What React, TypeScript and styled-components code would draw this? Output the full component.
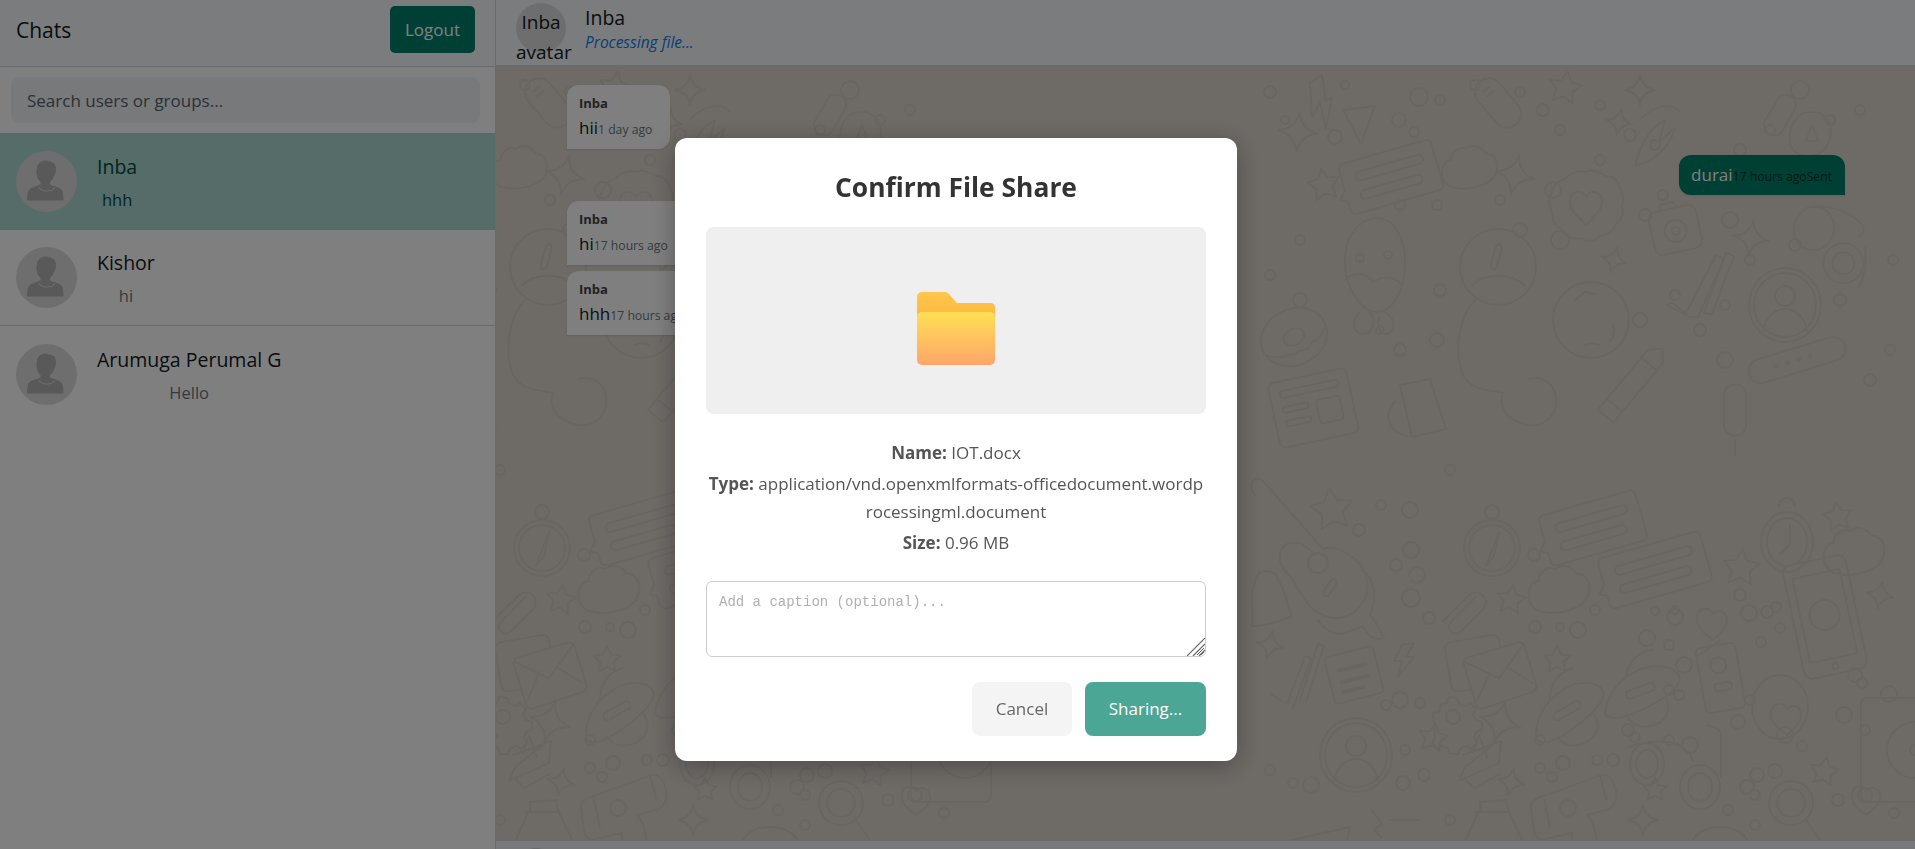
import React from 'react';
import styled, { createGlobalStyle } from 'styled-components';

const GlobalStyle = createGlobalStyle`
  html, body {
    margin: 0;
    padding: 0;
    height: 100%;
    overflow: hidden;
    background: #fff;
    font-family: "Open Sans", "Noto Sans", sans-serif;
    color: #111b21;
  }
  * {
    box-sizing: border-box;
  }
`;

const Page = styled.div`
  display: flex;
  height: 100vh;
  overflow: hidden;
`;

const Sidebar = styled.aside`
  flex: 0 0 496px;
  display: flex;
  flex-direction: column;
  background: #fff;
  border-right: 1px solid #d1d7db;
`;

const SidebarHeader = styled.header`
  flex: 0 0 67px;
  display: flex;
  align-items: center;
  justify-content: space-between;
  padding: 0 20px 7px 16px;
  background: #f5f8fb;
  border-bottom: 1px solid #d1d7db;
`;

const SidebarTitle = styled.h2`
  margin: 0;
  font-size: 21px;
  font-weight: 400;
  color: #111b21;
`;

const LogoutButton = styled.button`
  width: 85px;
  height: 47px;
  border: none;
  border-radius: 5px;
  background: #008069;
  color: #fff;
  font: inherit;
  font-size: 17px;
`;

const SearchBox = styled.div`
  flex: 0 0 66px;
  padding: 10px 15px 10px 11px;
`;

const SearchInput = styled.input`
  width: 100%;
  height: 46px;
  padding: 0 16px;
  border: none;
  border-radius: 8px;
  background: #f0f2f5;
  font: inherit;
  font-size: 17px;
  &::placeholder {
    color: #54656f;
    opacity: 1;
  }
`;

const ChatRow = styled.div<{ $active?: boolean }>`
  height: 96.5px;
  display: flex;
  align-items: center;
  gap: 20px;
  padding: 0 16px;
  background: ${(p) => (p.$active ? '#add8d2' : '#fff')};
  & + & {
    border-bottom: 1px solid #d1d7db;
  }
  &:last-child {
    border-bottom: none;
  }
`;

const RowText = styled.div<{ $active?: boolean }>`
  display: flex;
  flex-direction: column;
  align-items: center;
  padding-top: 4px;
  color: ${(p) => (p.$active ? '#004d40' : '#111b21')};
`;

const RowName = styled.div`
  font-size: 19.5px;
  line-height: 33px;
`;

const RowPreview = styled.div<{ $active?: boolean }>`
  font-size: 16.5px;
  line-height: 33px;
  color: ${(p) => (p.$active ? '#004d40' : '#667781')};
`;

const ChatPane = styled.main`
  flex: 1;
  min-width: 0;
  display: flex;
  flex-direction: column;
`;

const ChatHeader = styled.header`
  flex: 0 0 66px;
  display: flex;
  gap: 19px;
  padding: 3px 20px 0;
  background: #f5f8fb;
  border-bottom: 1px solid #d1d7db;
`;

const HeaderAvatar = styled.div`
  flex: 0 0 50px;
  width: 50px;
  min-width: 0;
  height: 50px;
  padding-top: 4px;
  border-radius: 50%;
  background: #dcdcdc;
  font-size: 19px;
  line-height: 30px;
  text-align: center;
  color: #111b21;
`;

const HeaderText = styled.div`
  display: flex;
  flex-direction: column;
`;

const HeaderName = styled.div`
  font-size: 19.5px;
  line-height: 29px;
`;

const HeaderStatus = styled.div`
  font-size: 15.5px;
  line-height: 20px;
  font-style: italic;
  color: #0d80f2;
`;

const ChatBody = styled.section`
  position: relative;
  flex: 0 0 774px;
  display: flex;
  flex-direction: column;
  gap: 6px;
  padding: 19px 70px 0 71px;
  background: #dcd6ce;
  overflow: hidden;
`;

const Wallpaper = styled.svg`
  position: absolute;
  inset: 0;
  width: 100%;
  height: 100%;
  fill: none;
  stroke: #d2ccc3;
  stroke-width: 1.8;
  stroke-linecap: round;
  stroke-linejoin: round;
`;

const Bubble = styled.div<{ $mine?: boolean }>`
  position: relative;
  align-self: ${(p) => (p.$mine ? 'flex-end' : 'flex-start')};
  padding: ${(p) => (p.$mine ? '6px 13px 6px 12px' : '7px 18px 7px 12px')};
  background: ${(p) => (p.$mine ? '#008069' : '#fff')};
  color: ${(p) => (p.$mine ? '#fff' : '#111b21')};
  border-radius: ${(p) => (p.$mine ? '12px 12px 0 12px' : '12px 12px 12px 0')};
  box-shadow: 0 1px 2px rgba(0, 0, 0, 0.1);
`;

const Sender = styled.div`
  font-size: 13px;
  line-height: 22px;
  font-weight: 700;
  color: #444;
`;

const MessageText = styled.span`
  font-size: 17px;
  line-height: 28px;
`;

const MessageMeta = styled.span<{ $mine?: boolean }>`
  font-size: 12.2px;
  color: ${(p) => (p.$mine ? '#00332a' : '#667781')};
`;

const ChatFooter = styled.footer`
  flex: 0 0 70px;
  padding: 7px 20px;
  background: #f0f3f5;
  border-top: 1px solid #d1d7db;
`;

const AttachButton = styled.div`
  width: 40px;
  height: 40px;
  border-radius: 50%;
  background: #cfd3d6;
`;

const Overlay = styled.div`
  position: fixed;
  inset: 0;
  display: flex;
  align-items: flex-start;
  justify-content: center;
  padding: 138px 3px 0 0;
  background: rgba(0, 0, 0, 0.5);
`;

const Modal = styled.div`
  width: 562px;
  height: 623px;
  padding: 30px 31px 25px;
  border-radius: 12px;
  background: #fff;
  box-shadow: 0 5px 25px rgba(0, 0, 0, 0.3);
`;

const ModalTitle = styled.h3`
  margin: 0 0 21px;
  font-size: 26.4px;
  line-height: 38px;
  font-weight: 700;
  text-align: center;
  color: #333;
`;

const Preview = styled.div`
  height: 187px;
  padding-top: 15px;
  display: flex;
  align-items: center;
  justify-content: center;
  border-radius: 8px;
  background: #efefef;
`;

const Details = styled.div`
  margin: 24.5px 0 24px;
  display: flex;
  flex-direction: column;
  gap: 4px;
  text-align: center;
  color: #555;
`;

const DetailLine = styled.p`
  margin: 0;
  font-size: 17px;
  line-height: 27.5px;
  word-break: break-all;
`;

const CaptionField = styled.div`
  position: relative;
`;

const CaptionInput = styled.textarea`
  display: block;
  width: 100%;
  height: 76px;
  padding: 12px;
  border: 1px solid #ccc;
  border-radius: 6px;
  font-family: "Liberation Mono", monospace;
  font-size: 14px;
  &::placeholder {
    color: #b0b0b0;
    opacity: 1;
  }
`;

const ResizeGrip = styled.svg`
  position: absolute;
  right: 1px;
  bottom: 1px;
  pointer-events: none;
`;

const Actions = styled.div`
  margin-top: 25px;
  display: flex;
  justify-content: flex-end;
  gap: 13px;
`;

const ModalButton = styled.button<{ $primary?: boolean }>`
  width: ${(p) => (p.$primary ? '121px' : '100px')};
  height: 54px;
  border: none;
  border-radius: 8px;
  font: inherit;
  font-size: 17px;
  background: ${(p) => (p.$primary ? '#008069' : '#f4f4f4')};
  color: ${(p) => (p.$primary ? '#fff' : '#666')};
  opacity: ${(p) => (p.$primary ? 0.7 : 1)};
`;

const RowAvatar = () => (
  <svg width="61" height="61" viewBox="0 0 61 61">
    <circle cx="30.5" cy="30.5" r="30.5" fill="#dcdcdc" />
    <path
      d="M21 18c-.5-4 3-8 8-8.500 2 0 3 .5 4 1 4 0 7 2.500 7 7 0 3-.5 5-1.500 7-1 2.500-2.500 4.500-4 6-1 1-1 2.500.5 3.500 4 1.500 9 2.500 11 5.500 1 2 1.500 5.500 1.500 10H11c0-4.500.5-8 1.500-10 2-3 7-4 11-5.500 1.500-1 1.500-2.500.5-3.500-1.500-1.500-2.500-3.500-3-6-.5-2-1-4.500 0-6.500z"
      fill="#b2b2b2"
    />
    <path d="M23 36.500c2 2.500 5 3.500 8 3.500s6-1 8-3.500" fill="none" stroke="#dcdcdc" strokeWidth="1.2" />
  </svg>
);

const FolderIcon = () => (
  <svg width="78" height="73" viewBox="0 0 78 73">
    <defs>
      <linearGradient id="folderBack" x1="0" y1="0" x2="0" y2="1">
        <stop offset="0" stopColor="#ffc64d" />
        <stop offset="1" stopColor="#ffb03a" />
      </linearGradient>
      <linearGradient id="folderFront" x1="0" y1="0" x2="0" y2="1">
        <stop offset="0" stopColor="#ffdf55" />
        <stop offset="1" stopColor="#ffa56a" />
      </linearGradient>
    </defs>
    <path
      d="M5 0h23c1.500 0 2.500.5 3.500 1.500L40 11h34c2.200 0 4 1.800 4 4v25H0V5c0-2.800 2.200-5 5-5z"
      fill="url(#folderBack)"
    />
    <rect x="0" y="20" width="78" height="53" rx="5" fill="url(#folderFront)" />
  </svg>
);

const starPath = (r: number) => {
  let d = '';
  for (let i = 0; i < 10; i++) {
    const rad = i % 2 === 0 ? r : r * 0.5;
    const a = (Math.PI / 5) * i - Math.PI / 2;
    d += `${i === 0 ? 'M' : 'L'}${(rad * Math.cos(a)).toFixed(1)} ${(rad * Math.sin(a)).toFixed(1)}`;
  }
  return d + 'z';
};

const sparklePath = (r: number) => {
  const q = r * 0.14;
  return `M0 ${-r}Q${q} ${-q} ${r} 0Q${q} ${q} 0 ${r}Q${-q} ${q} ${-r} 0Q${-q} ${-q} 0 ${-r}z`;
};

const stars: number[][] = [
  [1565, 88, 17, 10], [1324, 185, 17, -10], [1511, 600, 15, 8], [1741, 568, 19, 5], [1838, 517, 15, -8],
  [1557, 660, 14, 0], [1332, 510, 22, -8], [1433, 738, 15, 10], [1824, 772, 15, 10], [1655, 790, 12, 0],
];

const sparkles: number[][] = [
  [1298, 132, 20, 5], [1640, 90, 15, 0], [1619, 122, 13, 10], [1515, 175, 20, 12], [1614, 260, 13, 15],
  [1751, 238, 18, 8], [1500, 722, 21, 15], [1270, 645, 14, 12], [1511, 782, 14, 12], [1643, 820, 15, 0],
  [1880, 595, 14, 10],
];

const dots: number[][] = [
  [1270, 92, 6], [1419, 97, 9], [1399, 120, 7], [1335, 137, 7], [1414, 132, 5], [1285, 120, 4], [1345, 85, 4],
  [1440, 100, 5], [1475, 85, 5], [1520, 92, 5], [1543, 110, 6], [1560, 130, 5], [1600, 105, 5], [1553, 190, 8],
  [1600, 160, 5], [1630, 135, 6], [1655, 145, 5], [1740, 150, 6], [1770, 130, 5], [1800, 90, 9], [1830, 120, 5],
  [1860, 110, 5], [1300, 240, 5], [1400, 205, 5], [1437, 205, 5], [1520, 230, 7], [1500, 200, 5], [1560, 240, 9],
  [1645, 215, 6], [1663, 195, 5], [1730, 220, 8], [1750, 260, 5], [1795, 245, 6], [1840, 300, 6], [1893, 260, 5],
  [1300, 300, 7], [1270, 275, 5], [1440, 290, 6], [1437, 340, 7], [1675, 295, 5], [1640, 320, 7], [1700, 330, 6],
  [1725, 305, 5], [1725, 360, 8], [1870, 380, 6], [1890, 350, 5], [1400, 350, 6], [1380, 330, 4], [1450, 470, 5],
  [1410, 510, 8], [1381, 505, 5], [1359, 530, 6], [1411, 550, 8], [1396, 565, 6], [1417, 575, 8], [1411, 598, 9],
  [1429, 618, 6], [1534, 555, 6], [1535, 627, 6], [1560, 627, 4], [1578, 630, 8], [1595, 610, 5], [1655, 611, 4],
  [1675, 610, 4], [1675, 617, 8], [1647, 638, 8], [1669, 645, 5], [1749, 613, 8], [1740, 595, 6], [1767, 612, 6],
  [1761, 642, 5], [1780, 628, 5], [1776, 607, 5], [1669, 690, 5], [1684, 665, 8], [1679, 695, 5], [1738, 722, 7],
  [1750, 700, 5], [1690, 745, 8], [1628, 730, 6], [1635, 737, 5], [1669, 740, 5], [1785, 735, 8], [1802, 746, 5],
  [1844, 715, 8], [1865, 730, 5], [1889, 694, 8], [1855, 675, 7], [1862, 683, 5], [1270, 770, 5], [1293, 783, 5],
  [1311, 785, 8], [1400, 700, 8], [1420, 703, 5], [1386, 705, 5], [1405, 750, 5], [1403, 783, 7], [1424, 775, 6],
  [1540, 740, 5], [1563, 763, 7], [1597, 760, 5], [1613, 760, 6], [1540, 768, 5], [1552, 777, 5], [1728, 810, 5],
  [1755, 795, 5], [1755, 825, 5], [1838, 800, 6], [1865, 795, 7], [1894, 813, 5], [1450, 820, 5],
];

const ChatLines = ({ x, y, w, rot }: { x: number; y: number; w: number; rot: number }) => (
  <g transform={`translate(${x} ${y}) rotate(${rot})`}>
    <path
      d={`M${-w / 2 + 6} -26H${w / 2 - 6}q6 0 6 6v40q0 6-6 6H${-w / 2 + 6}q-6 0-6-6v-8l-7-4 7-8v-20q0-6 6-6z`}
    />
    <rect x={-w / 2 + 14} y="-14" width={w - 26} height="9" rx="4.500" />
    <rect x={-w / 2 + 14} y="5" width={w - 32} height="9" rx="4.500" />
  </g>
);

const Compass = ({ x, y }: { x: number; y: number }) => (
  <g transform={`translate(${x} ${y})`}>
    <circle r="28" />
    <circle cy="-36" r="7" />
    <circle r="23" />
    <path d="M7-16L-6 18 2 8z" />
  </g>
);

const Envelope = ({ x, y }: { x: number; y: number }) => (
  <g transform={`translate(${x} ${y}) rotate(-10)`}>
    <rect x="-46" y="-28" width="55" height="50" rx="7" />
    <path d="M-25-10l52-6q5 0 6 5l5 40q0 5-5 6l-52 8q-5 0-6-5l-5-42q0-5 5-6z" fill="#dcd6ce" />
    <path d="M-28-6L2 16 33-14M-22 33L-6 8M34 26L14 8" />
  </g>
);

const Cloud = ({ x, y, s = 1 }: { x: number; y: number; s?: number }) => (
  <g transform={`translate(${x} ${y}) scale(${s})`}>
    <path d="M-18 20c-10 0-16-8-15-17 0-7 5-11 9-11 0-9 8-14 15-11 5-5 16-3 19 4 8 0 13 7 12 15 0 10-10 16-17 18-8 2-15 4-23 2z" />
  </g>
);

const Rocket = ({ x, y, rot = -30 }: { x: number; y: number; rot?: number }) => (
  <g transform={`translate(${x} ${y}) rotate(${rot})`}>
    <path d="M-40 8c8-18 26-30 50-30 20 0 34 12 32 22-2 8-20 14-42 16-16 2-36 2-40-8z" />
    <rect x="-14" y="-6" width="30" height="8" rx="4" />
    <path d="M-20 16c0 14 16 22 30 18 10-3 14-12 12-22" />
    <path d="M-8-20c8-14 22-20 36-16" />
  </g>
);

const Ring = ({ x, y }: { x: number; y: number }) => (
  <g transform={`translate(${x} ${y})`}>
    <ellipse rx="36" ry="37" />
    <ellipse rx="31" ry="32" />
    <circle cy="-9" r="10" />
    <path d="M-22 26c2-14 12-22 22-22s20 8 22 22" />
  </g>
);

const Doodles = () => (
  <>
    {stars.map(([x, y, r, rot]) => (
      <path key={`s${x}${y}`} d={starPath(r)} transform={`translate(${x} ${y}) rotate(${rot})`} />
    ))}
    {sparkles.map(([x, y, r, rot]) => (
      <path key={`p${x}${y}`} d={sparklePath(r)} transform={`translate(${x} ${y}) rotate(${rot})`} />
    ))}
    {dots.map(([x, y, r]) => (
      <circle key={`d${x}${y}`} cx={x} cy={y} r={r} />
    ))}
    <ChatLines x={1391} y={177} w={96} rot={-16} />
    <ChatLines x={1593} y={528} w={100} rot={-16} />
    <ChatLines x={1655} y={570} w={106} rot={-16} />
    <Compass x={1492} y={548} />
    <Cloud x={1475} y={168} />
    <Cloud x={1565} y={590} s={1.1} />
    <Cloud x={1860} y={552} s={1.1} />
    <Envelope x={1494} y={663} />
    <Rocket x={1567} y={713} />
    <Rocket x={1640} y={693} rot={-20} />
    <Ring x={1785} y={305} />
    <Ring x={1356} y={755} />
    {/* astronaut */}
    <circle cx="1498" cy="267" r="38" />
    <path d="M1472 285c12-12 40-12 52 0M1495 250c2-8 8-8 6 2l-4 14c-2 6-6 4-6-2zM1475 300c-15 15-22 50-12 75 8 16 28 15 40 18-5 15 5 28 25 32 18 3 30-12 28-28-2-14-14-22-28-18" />
    {/* penguin */}
    <path d="M1345 260c0-28 18-42 32-42s28 14 28 44c0 32-14 50-28 50s-32-20-32-52zM1345 280c8-8 20-8 28 2 10-6 22-6 28 2M1360 312c-8 6-8 20 2 22 12 0 14-14 8-22M1385 312c10 6 12 18 2 22-8 0-10-8-8-16" />
    <circle cx="1360" cy="258" r="4" />
    <circle cx="1388" cy="255" r="4" />
    {/* cookie heart */}
    <path d="M1586 172c8-4 14 2 20 4 8 0 12 4 14 12 4 6 4 12 2 18 2 8 0 14-6 18-2 8-8 10-16 12-6 6-14 6-20 2-8 2-14-2-18-8-8-4-10-10-10-18-4-6-4-14 0-20 2-8 8-12 14-14 6-6 14-8 20-6z" />
    <path d="M1586 225c-8-8-16-14-16-24 0-10 12-12 16-4 4-8 16-6 16 4 0 10-8 16-16 24z" />
    {/* cookie planet */}
    <circle cx="1591" cy="320" r="38" />
    <path d="M1575 300l10-8 10 2M1585 345c4-2 10-2 14 0M1612 325c4 4 2 12-2 16" />
    {/* camera */}
    <g transform="translate(1675 228) rotate(-12)">
      <rect x="-24" y="-20" width="48" height="44" rx="8" />
      <circle r="11" cy="3" />
      <circle r="4" cy="3" />
      <path d="M-12-20l3-6h12l3 6" />
    </g>
    {/* check mark */}
    <path d="M1672 303l14 10 30-58 8 4-26 58-8 0-24-12z" />
    <path d="M1704 313l22-60 8 3-22 58z" />
    <path d="M1287 704l-16-10M1287 704l18-48 6 3-18 49M1300 700l18-56 6 2-18 56" />
    {/* sunglasses */}
    <g transform="translate(1830 240) rotate(12)">
      <ellipse cx="-18" cy="-8" rx="20" ry="22" />
      <ellipse cx="18" cy="20" rx="20" ry="20" />
      <circle cx="18" cy="20" r="11" />
      <path d="M-26-28c16-6 36-6 54 6 4 4 4 8 0 12M36 0c4 14 6 28 2 40" />
    </g>
    {/* band */}
    <g transform="translate(1797 360) rotate(-17)">
      <rect x="-50" y="-12" width="100" height="24" rx="12" />
      <circle cx="-22" cy="0" r="1.500" />
      <circle cx="-10" cy="0" r="1.500" />
      <circle cx="2" cy="0" r="1.500" />
      <circle cx="14" cy="0" r="1.500" />
    </g>
    {/* donut */}
    <g transform="translate(1294 337) rotate(-25)">
      <ellipse rx="34" ry="28" />
      <ellipse rx="11" ry="8" />
      <path d="M-32 6c6 6 10 4 14 8 6-4 10 6 16 0 6 4 12 2 16-2 6 2 12-2 18-8" />
    </g>
    {/* pencil */}
    <g transform="translate(1630 387) rotate(40)">
      <path d="M-10-40l10-10 10 10V38H-10zM-10-30H10M-10 24H10" />
    </g>
    {/* mic */}
    <path d="M1724 395c0-14 22-14 22 0v30c0 14-22 14-22 0zM1735 440v16" />
    {/* newspaper */}
    <g transform="translate(1313 407) rotate(-12)">
      <rect x="-40" y="-32" width="80" height="66" rx="6" />
      <rect x="-30" y="-22" width="60" height="7" rx="3.500" />
      <rect x="-30" y="-6" width="26" height="6" rx="3" />
      <rect x="-30" y="8" width="26" height="6" rx="3" />
      <rect x="4" y="-6" width="24" height="24" rx="3" />
    </g>
    {/* mug */}
    <path d="M1400 385l30-6 16 50-34 8zM1395 402c-12 10-8 30 12 34" />
    {/* guitar */}
    <path d="M1255 495c-8-8-2-22 8-14l60 68c10-4 24 2 36 14 10 12 12 30 2 42-8 12-28 20-48 4-12-10-16-26-26-36-12-12-8-30 6-30 8-2 14 4 22 12" />
    <circle cx="1318" cy="563" r="10" />
    <path d="M1336 585l-7 10c-3 3-7 0-5-4l7-11c3-3 7 1 5 5z" />
    {/* flame */}
    <path d="M1362 570c12 8 16 28 8 44 6 8 10 16 14 24-10 4-16-4-22-12l-20 8c-10 0-18-4-24-14" />
    {/* bell */}
    <path d="M1256 580c0-12 20-12 22 0 8 10 8 26 14 36-10 6-30 10-40 10 2-16-4-32 4-46z" />
    {/* clock */}
    <g transform="translate(1787 542)">
      <ellipse rx="26" ry="30" />
      <ellipse rx="20" ry="24" />
      <path d="M3-16V2l-10 10M-8-36a8 8 0 0 1 16 0" />
    </g>
    {/* phone */}
    <g transform="translate(1825 617) rotate(-12)">
      <rect x="-32" y="-58" width="64" height="116" rx="8" />
      <rect x="-24" y="-44" width="48" height="86" rx="2" />
      <circle cy="-2" r="15" />
      <circle cy="50" r="3" />
    </g>
    {/* paperclip */}
    <g transform="translate(1464 617) rotate(45)">
      <path d="M-6-22v34c0 10 14 10 14 0v-30c0-14-20-14-20 0v36" />
    </g>
    {/* notebook */}
    <g transform="translate(1720 675) rotate(-10)">
      <rect x="-20" y="-30" width="40" height="66" rx="5" />
      <path d="M-20-22l26-12" />
      <circle cy="-10" r="8" />
      <rect x="-8" y="8" width="18" height="8" rx="4" />
    </g>
    {/* hearts */}
    <path d="M1713 640c-10-8-18-14-16-24 2-8 12-10 16-2 6-6 14-2 14 6 0 8-6 14-14 20z" />
    <path d="M1787 735c-10-8-18-14-16-24 2-8 12-10 16-2 6-6 14-2 14 6 0 8-6 14-14 20z" />
    <path d="M1866 815c-10-8-16-12-14-22 2-8 12-8 14-2 6-6 14-2 14 6 0 8-6 12-14 18z" />
    <ellipse cx="1780" cy="707" rx="28" ry="32" />
    {/* note card */}
    <g transform="translate(1354 675) rotate(-14)">
      <rect x="-25" y="-24" width="50" height="48" rx="4" />
      <path d="M-14-8H14M-14 4H14M-14 14H6" strokeWidth="4" />
    </g>
    {/* lightning */}
    <path d="M1322 75l-12 8 2 34 8-14 6 26 6-32-6 4z" />
    <path d="M1402 645l12-2-8 14 8 0-16 20 4-16-8 0z" />
    {/* paper plane */}
    <path d="M1343 110l32-4-14 38zM1343 110l18 34" />
    {/* mouse */}
    <g transform="translate(1498 103) rotate(-40)">
      <rect x="-14" y="-28" width="28" height="56" rx="14" />
      <path d="M-4-18H4M-4-12H4" />
    </g>
    {/* leaf */}
    <path d="M1635 165c6-22 16-38 30-45l-6 22 16-14c-3 14-20 36-40 37zM1640 120c10-12 30-20 40-8" />
    <g transform="translate(1780 115) rotate(30)">
      <rect x="-10" y="-22" width="20" height="44" rx="10" />
    </g>
    <path d="M1810 112c-14 0-22 14-20 32 4 14 28 18 38 0 8-16-2-34-18-32zM1812 125l-6 16h12z" />
    {/* gear */}
    <g transform="translate(1453 717)">
      <path d="M-20-4l6-1 2-8 6-1 2-6 8 1 2 6 7 2 4-3 6 6-3 5 3 6 6 2 0 8-6 2-2 6 3 5-6 6-5-3-6 3-2 5h-8l-2-6-6-2-4 3-6-6 3-5z" />
      <circle r="7" />
    </g>
    {/* bow */}
    <path d="M1463 755l38-14-2 22-40 18 6-14 28-22zM1473 753l6-18 8 22M1466 780l8 8 26-14" />
    {/* goggles */}
    <g transform="translate(1679 777)">
      <ellipse cx="-32" cy="-13" rx="17" ry="21" />
      <ellipse cx="-32" cy="-13" rx="11" ry="14" />
      <ellipse cx="21" cy="10" rx="20" ry="22" />
      <ellipse cx="21" cy="10" rx="12" ry="14" />
      <path d="M-50-30c20-8 40-6 50-2 8 4 12 10 14 16M42 0V-40c0-6-2-8-8-10l-6-2" />
    </g>
    {/* magnifier */}
    <g transform="translate(1791 803)">
      <circle r="22" />
      <circle r="14" />
      <path d="M16 18l24 36" />
      <circle cx="-44" cy="-16" r="7" />
      <circle cx="-34" cy="-28" r="7" />
      <circle cx="-16" cy="-32" r="7" />
    </g>
    {/* speaker */}
    <g transform="translate(1899 750)">
      <rect x="-38" y="-52" width="80" height="104" rx="6" />
      <circle cx="16" r="28" />
      <circle cx="16" r="5" />
    </g>
    {/* can */}
    <g transform="translate(1576 803)">
      <path d="M-45 4c0-6 4-8 10-10l60-22c8-2 12 4 14 12 4 10 0 18-6 22l-22 6c10 10 10 30 10 40H-4v-22c0 0-18 4-26 6-6 2-10 0-12-8z" />
      <path d="M-32-4l6 28M24-28l6 24" />
      <circle cx="-8" cy="5" r="8" />
    </g>
    {/* carton */}
    <path d="M1466 840l12-28h2v-10l26-2 2 10 14 30M1476 812h32" />
    <path d="M1270 845l80-18-4 18M1372 810l10 14-8 6 8 8M1390 820h30" />
    <ellipse cx="1720" cy="845" rx="28" ry="18" />
  </>
);

const ChatWallpaper = () => (
  <Wallpaper viewBox="496 66 1419 774" preserveAspectRatio="xMinYMin slice" aria-hidden="true">
    <g id="doodles">
      <Doodles />
    </g>
    <use href="#doodles" x="-950" />
  </Wallpaper>
);

const chats = [
  { name: 'Inba', preview: 'hhh', active: true },
  { name: 'Kishor', preview: 'hi' },
  { name: 'Arumuga Perumal G', preview: 'Hello' },
];

export default function App() {
  return (
    <>
      <GlobalStyle />
      <Page>
        <Sidebar>
          <SidebarHeader>
            <SidebarTitle>Chats</SidebarTitle>
            <LogoutButton>Logout</LogoutButton>
          </SidebarHeader>
          <SearchBox>
            <SearchInput placeholder="Search users or groups..." />
          </SearchBox>
          {chats.map((chat) => (
            <ChatRow key={chat.name} $active={chat.active}>
              <RowAvatar />
              <RowText $active={chat.active}>
                <RowName>{chat.name}</RowName>
                <RowPreview $active={chat.active}>{chat.preview}</RowPreview>
              </RowText>
            </ChatRow>
          ))}
        </Sidebar>
        <ChatPane>
          <ChatHeader>
            <HeaderAvatar>Inba avatar</HeaderAvatar>
            <HeaderText>
              <HeaderName>Inba</HeaderName>
              <HeaderStatus>Processing file...</HeaderStatus>
            </HeaderText>
          </ChatHeader>
          <ChatBody>
            <ChatWallpaper />
            <Bubble>
              <Sender>Inba</Sender>
              <MessageText>hii</MessageText>
              <MessageMeta>1 day ago</MessageMeta>
            </Bubble>
            <Bubble $mine>
              <MessageText>durai</MessageText>
              <MessageMeta $mine>17 hours ago</MessageMeta>
              <MessageMeta $mine>Sent</MessageMeta>
            </Bubble>
            <Bubble>
              <Sender>Inba</Sender>
              <MessageText>hi</MessageText>
              <MessageMeta>17 hours ago</MessageMeta>
            </Bubble>
            <Bubble>
              <Sender>Inba</Sender>
              <MessageText>hhh</MessageText>
              <MessageMeta>17 hours ago</MessageMeta>
            </Bubble>
          </ChatBody>
          <ChatFooter>
            <AttachButton />
          </ChatFooter>
        </ChatPane>
      </Page>
      <Overlay>
        <Modal>
          <ModalTitle>Confirm File Share</ModalTitle>
          <Preview>
            <FolderIcon />
          </Preview>
          <Details>
            <DetailLine>
              <strong>Name:</strong> IOT.docx
            </DetailLine>
            <DetailLine>
              <strong>Type:</strong> application/vnd.openxmlformats-officedocument.wordprocessingml.document
            </DetailLine>
            <DetailLine>
              <strong>Size:</strong> 0.96 MB
            </DetailLine>
          </Details>
          <CaptionField>
            <CaptionInput placeholder="Add a caption (optional)..." />
            <ResizeGrip width="18" height="18" viewBox="0 0 18 18" aria-hidden="true">
              <path d="M0 18L18 0M6 18L18 6M12 18L18 12" stroke="#666" strokeWidth="1.2" fill="none" />
            </ResizeGrip>
          </CaptionField>
          <Actions>
            <ModalButton>Cancel</ModalButton>
            <ModalButton $primary>Sharing...</ModalButton>
          </Actions>
        </Modal>
      </Overlay>
    </>
  );
}
